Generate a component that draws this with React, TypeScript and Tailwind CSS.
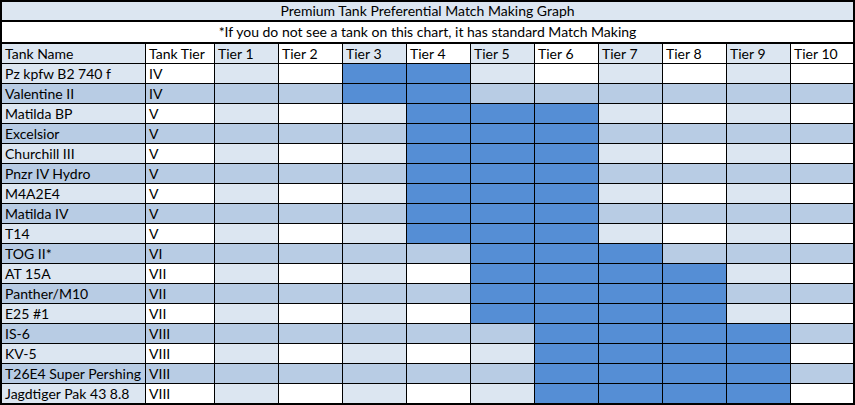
import React from 'react';

type Row = { name: string; tier: string; from: number; to: number };

const rows: Row[] = [
  { name: 'Pz kpfw B2 740 f', tier: 'IV', from: 3, to: 4 },
  { name: 'Valentine II', tier: 'IV', from: 3, to: 4 },
  { name: 'Matilda BP', tier: 'V', from: 4, to: 6 },
  { name: 'Excelsior', tier: 'V', from: 4, to: 6 },
  { name: 'Churchill III', tier: 'V', from: 4, to: 6 },
  { name: 'Pnzr IV Hydro', tier: 'V', from: 4, to: 6 },
  { name: 'M4A2E4', tier: 'V', from: 4, to: 6 },
  { name: 'Matilda IV', tier: 'V', from: 4, to: 6 },
  { name: 'T14', tier: 'V', from: 4, to: 6 },
  { name: 'TOG II*', tier: 'VI', from: 5, to: 7 },
  { name: 'AT 15A', tier: 'VII', from: 5, to: 8 },
  { name: 'Panther/M10', tier: 'VII', from: 5, to: 8 },
  { name: 'E25 #1', tier: 'VII', from: 5, to: 8 },
  { name: 'IS-6', tier: 'VIII', from: 6, to: 9 },
  { name: 'KV-5', tier: 'VIII', from: 6, to: 9 },
  { name: 'T26E4 Super Pershing', tier: 'VIII', from: 6, to: 9 },
  { name: 'Jagdtiger Pak 43 8.8', tier: 'VIII', from: 6, to: 9 },
];

const tiers = [1, 2, 3, 4, 5, 6, 7, 8, 9, 10];

// striped like the sheet: odd rows alternate light/white by column, even rows are darker blue
const cellBg = (rowIdx: number, colIdx: number) => {
  if (rowIdx % 2 === 1) return 'bg-[#b8cce4]';
  return colIdx % 2 === 0 ? 'bg-[#dce6f1]' : 'bg-white';
};

export default function App() {
  return (
    <div className="w-[855px] h-[405px] border-2 border-black flex flex-col bg-white text-black font-['Lato','Liberation_Sans',sans-serif] text-[14px] leading-none">
      <div className="h-[20px] shrink-0 border-b-2 border-black bg-[#dce6f1] flex items-center justify-center">
        Premium Tank Preferential Match Making Graph
      </div>
      <div className="h-[22px] shrink-0 border-b-2 border-black bg-white flex items-center justify-center">
        *If you do not see a tank on this chart, it has standard Match Making
      </div>
      <div className="grid grid-cols-[143px_68px_repeat(9,63px)_62px] auto-rows-[19px] gap-px bg-black">
        <div className={`${cellBg(0, 0)} flex items-center pl-[3px]`}>Tank Name</div>
        <div className={`${cellBg(0, 1)} flex items-center pl-[3px]`}>Tank Tier</div>
        {tiers.map((t, i) => (
          <div key={t} className={`${cellBg(0, i + 2)} flex items-center pl-[3px]`}>
            Tier {t}
          </div>
        ))}
        {rows.map((r, ri) => (
          <React.Fragment key={r.name}>
            <div className={`${cellBg(ri, 0)} flex items-center pl-[3px] whitespace-nowrap`}>{r.name}</div>
            <div className={`${cellBg(ri, 1)} flex items-center pl-[3px]`}>{r.tier}</div>
            {tiers.map((t, i) => (
              <div
                key={t}
                className={t >= r.from && t <= r.to ? 'bg-[#558ed5]' : cellBg(ri, i + 2)}
              />
            ))}
          </React.Fragment>
        ))}
      </div>
    </div>
  );
}
